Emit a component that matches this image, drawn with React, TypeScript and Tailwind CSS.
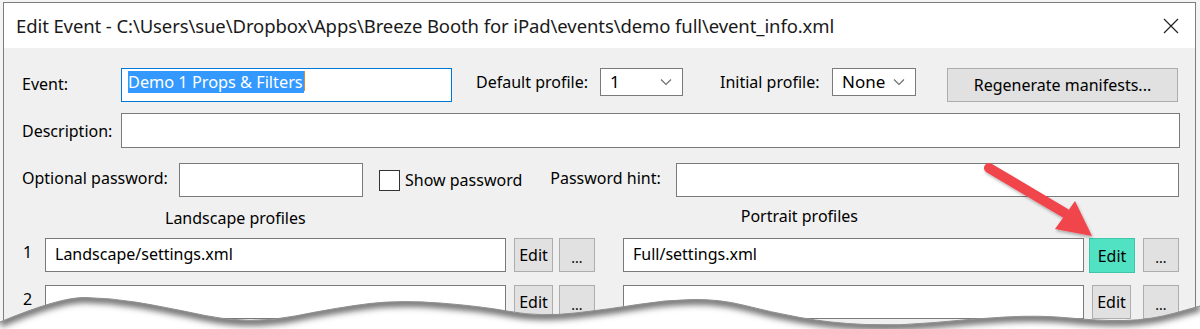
import React from "react";

const FONT = "font-['Noto_Sans','Liberation_Sans',sans-serif]";

function Chevron() {
  return (
    <svg width="12" height="8" viewBox="0 0 12 8" className="shrink-0">
      <polyline points="1,1.5 6,6.5 11,1.5" fill="none" stroke="#6b6b6b" strokeWidth="1.1" />
    </svg>
  );
}

function Select({ value, width }: { value: string; width: string }) {
  return (
    <div
      className={`flex h-[28px] items-center justify-between border border-[#7a7a7a] bg-white pl-[9px] pr-[10px] text-[17px] ${width}`}
    >
      <span>{value}</span>
      <Chevron />
    </div>
  );
}

function Btn({
  children,
  className = "",
}: {
  children: React.ReactNode;
  className?: string;
}) {
  return (
    <div
      className={`flex h-[34px] items-center justify-center border border-[#adadad] bg-[#e1e1e1] ${className}`}
    >
      {children}
    </div>
  );
}

function Field({ className = "", children }: { className?: string; children?: React.ReactNode }) {
  return (
    <div className={`flex h-[34px] items-start border border-[#7a7a7a] bg-white pl-[9px] pt-[4px] ${className}`}>
      {children}
    </div>
  );
}

// points along the torn edge, local to the svg (top = 279px)
const EDGE_PTS: [number, number][] = [
  [0, 43], [60, 18], [110, 19], [160, 27], [250, 46], [340, 28], [400, 21],
  [480, 27], [540, 38], [610, 30], [665, 21], [720, 20], [770, 33], [830, 44],
  [900, 47], [970, 40], [1040, 36], [1100, 42], [1150, 41], [1200, 27],
];

function smooth(pts: [number, number][]) {
  let d = `M${pts[0][0]},${pts[0][1]}`;
  for (let i = 1; i < pts.length - 1; i++) {
    const [x, y] = pts[i];
    const [nx, ny] = pts[i + 1];
    d += ` Q${x},${y} ${(x + nx) / 2},${(y + ny) / 2}`;
  }
  const last = pts[pts.length - 1];
  d += ` L${last[0]},${last[1]}`;
  return d;
}

function TornEdge() {
  const edge = smooth(EDGE_PTS);
  const fill = `${edge} L1200,50 L0,50 Z`;
  return (
    <svg
      width="1200"
      height="50"
      viewBox="0 0 1200 50"
      className="pointer-events-none absolute bottom-0 left-0"
    >
      <defs>
        <clipPath id="below">
          <path d={fill} />
        </clipPath>
        <filter id="blur" x="-5%" y="-50%" width="110%" height="200%">
          <feGaussianBlur stdDeviation="3" />
        </filter>
      </defs>
      <path d={fill} fill="#ffffff" />
      <g clipPath="url(#below)">
        <path d={edge} fill="none" stroke="#666" strokeWidth="8" filter="url(#blur)" transform="translate(0,1)" />
      </g>
      <path d={edge} fill="none" stroke="#8f8f8f" strokeWidth="1" />
    </svg>
  );
}

function Arrow() {
  return (
    <svg
      width="130"
      height="95"
      viewBox="0 0 130 95"
      className="pointer-events-none absolute left-[975px] top-[155px]"
    >
      <defs>
        <filter id="sh" x="-20%" y="-20%" width="140%" height="140%">
          <feDropShadow dx="1" dy="2" stdDeviation="1.5" floodColor="#000" floodOpacity="0.3" />
        </filter>
      </defs>
      <g filter="url(#sh)">
        <line x1="14" y1="13" x2="90" y2="58" stroke="#f0444b" strokeWidth="10" strokeLinecap="round" />
        <polygon points="80,74 100,46 117,81" fill="#f0444b" />
      </g>
    </svg>
  );
}

export default function App() {
  return (
    <div
      className={`relative h-[329px] w-[1200px] overflow-hidden bg-[#f4f4f4] text-[16px] leading-[22px] text-black ${FONT}`}
    >
      <div className="ml-[3px] mt-[2px] h-[340px] w-[1193px] border-l border-r border-t border-[#7d7d7d] bg-[#f0f0f0]">
        {/* title bar */}
        <div className="flex h-[45px] items-center justify-between bg-white pl-[12px] pr-[16px]">
          <span className="text-[18.5px] tracking-[-0.1px] text-[#1a1a1a]">
            Edit Event - C:\Users\sue\Dropbox\Apps\Breeze Booth for iPad\events\demo full\event_info.xml
          </span>
          <svg width="16" height="16" viewBox="0 0 16 16">
            <path d="M1 1 L15 15 M15 1 L1 15" stroke="#222" strokeWidth="1.2" />
          </svg>
        </div>

        <div className="flex flex-col pl-[18px] pt-[20px]">
          {/* event row */}
          <div className="flex items-start">
            <span className="mt-[5px] w-[99px]">Event:</span>
            <div className="flex h-[34px] w-[331px] items-start border border-[#0078d7] bg-white pl-[6px] pt-[2px] text-[16.3px]">
              <span className="bg-[#3399ff] pr-[1px] text-white">Demo 1 Props &amp; Filters</span>
              <span className="h-[20px] w-[1px] bg-[#d98a3a]" />
            </div>
            <span className="ml-[24px] mt-[3px] w-[124px]">Default profile:</span>
            <Select value="1" width="w-[83px]" />
            <span className="ml-[37px] mt-[3px] w-[112px]">Initial profile:</span>
            <Select value="None" width="w-[84px]" />
            <Btn className="ml-[31px] h-[32px] w-[231px]">Regenerate manifests...</Btn>
          </div>

          {/* description */}
          <div className="mt-[11px] flex items-center">
            <span className="w-[99px]">Description:</span>
            <Field className="h-[35px] w-[1059px]" />
          </div>

          {/* password */}
          <div className="mt-[15px] flex items-center">
            <span className="-mt-[4px] w-[157px]">Optional password:</span>
            <Field className="w-[184px]" />
            <div className="ml-[16px] h-[21px] w-[21px] border border-[#333] bg-white" />
            <span className="ml-[5px]">Show password</span>
            <span className="-mt-[4px] ml-[28px] w-[126px]">Password hint:</span>
            <Field className="w-[503px]" />
          </div>

          {/* headers */}
          <div className="mt-[8px] flex h-[26px] items-center">
            <span className="ml-[143px]">Landscape profiles</span>
            <span className="-mt-[5px] ml-[435px]">Portrait profiles</span>
          </div>

          {[
            { n: "1", left: "Landscape/settings.xml", right: "Full/settings.xml", hl: true },
            { n: "2", left: "", right: "", hl: false },
          ].map((r, i) => (
            <div key={r.n} className={`flex items-start ${i === 0 ? "mt-[7px]" : "mt-[12px]"}`}>
              <span className="mt-[3px] w-[23px] pl-[1px]">{r.n}</span>
              <Field className="w-[461px]">{r.left}</Field>
              <Btn className="ml-[8px] w-[39px]">Edit</Btn>
              <Btn className="ml-[6px] w-[36px] pt-[6px] text-[14px]">...</Btn>
              <Field className="ml-[28px] w-[461px]">{r.right}</Field>
              {r.hl ? (
                <div className="ml-[5px] flex h-[35px] w-[46px] items-center justify-center border border-[#3dc6a8] bg-[#50e2c3]">
                  Edit
                </div>
              ) : (
                <Btn className="ml-[8px] w-[39px]">Edit</Btn>
              )}
              <Btn className={`${r.hl ? "ml-[8px]" : "ml-[12px]"} w-[36px] pt-[6px] text-[14px]`}>...</Btn>
            </div>
          ))}
        </div>
      </div>

      <Arrow />
      <TornEdge />
    </div>
  );
}
